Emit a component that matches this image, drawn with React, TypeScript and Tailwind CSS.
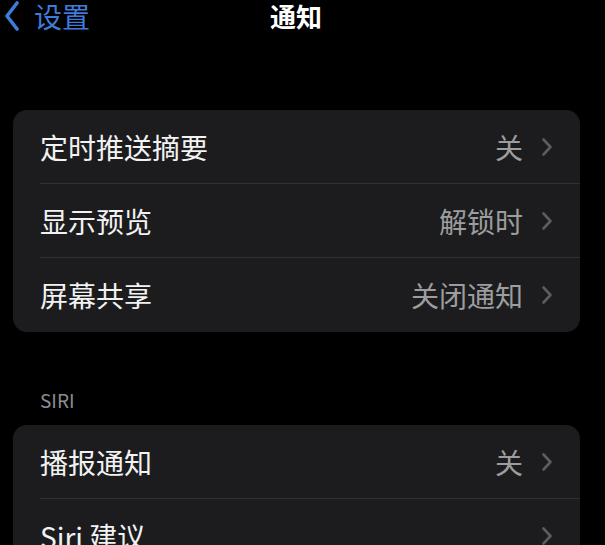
import React from 'react';

const font = { fontFamily: '"Noto Sans CJK SC", "Noto Sans", sans-serif' };

type Row = { label: string; value?: string };

function Chevron() {
  return (
    <svg width="12" height="20" viewBox="0 0 12 20" className="shrink-0">
      <path
        d="M2.5 2.5 L9.5 10 L2.5 17.5"
        fill="none"
        stroke="#5c5c60"
        strokeWidth="2.6"
        strokeLinecap="round"
        strokeLinejoin="round"
      />
    </svg>
  );
}

function Group({ rows }: { rows: Row[] }) {
  return (
    <div className="mx-[13px] w-[567px] overflow-hidden rounded-[14px] bg-[#1c1c1e]">
      {rows.map((row, i) => (
        <div key={row.label} className="pl-[27px]">
          <div
            className={
              'flex h-[74px] items-center pr-[27px] ' +
              (i < rows.length - 1 ? 'border-b border-[#313133]' : '')
            }
          >
            <span className="flex-1 text-[28px] leading-none text-[#f2f2f2]">
              {row.label}
            </span>
            {row.value && (
              <span className="mr-[18px] text-[28px] leading-none text-[#9d9d9f]">
                {row.value}
              </span>
            )}
            <Chevron />
          </div>
        </div>
      ))}
    </div>
  );
}

export default function App() {
  return (
    <div className="h-[545px] w-[605px] overflow-hidden bg-black" style={font}>
      <div className="relative flex h-[32px] items-center">
        <div className="flex items-center pl-[4px]">
          <svg width="16" height="30" viewBox="0 0 16 30">
            <path
              d="M13 2 L3 15 L13 28"
              fill="none"
              stroke="#3f7bdb"
              strokeWidth="3.6"
              strokeLinecap="round"
              strokeLinejoin="round"
            />
          </svg>
          <span className="ml-[14px] text-[28px] leading-none text-[#3f7bdb]">设置</span>
        </div>
        <span className="absolute left-[270px] text-[26px] font-semibold leading-none text-white">
          通知
        </span>
      </div>

      <div className="mt-[78px]">
        <Group
          rows={[
            { label: '定时推送摘要', value: '关' },
            { label: '显示预览', value: '解锁时' },
            { label: '屏幕共享', value: '关闭通知' },
          ]}
        />
      </div>

      <div className="mt-[58px] pl-[40px] text-[19px] leading-none text-[#8d8d92]">SIRI</div>

      <div className="mt-[16px]">
        <Group
          rows={[
            { label: '播报通知', value: '关' },
            { label: 'Siri 建议' },
          ]}
        />
      </div>
    </div>
  );
}
